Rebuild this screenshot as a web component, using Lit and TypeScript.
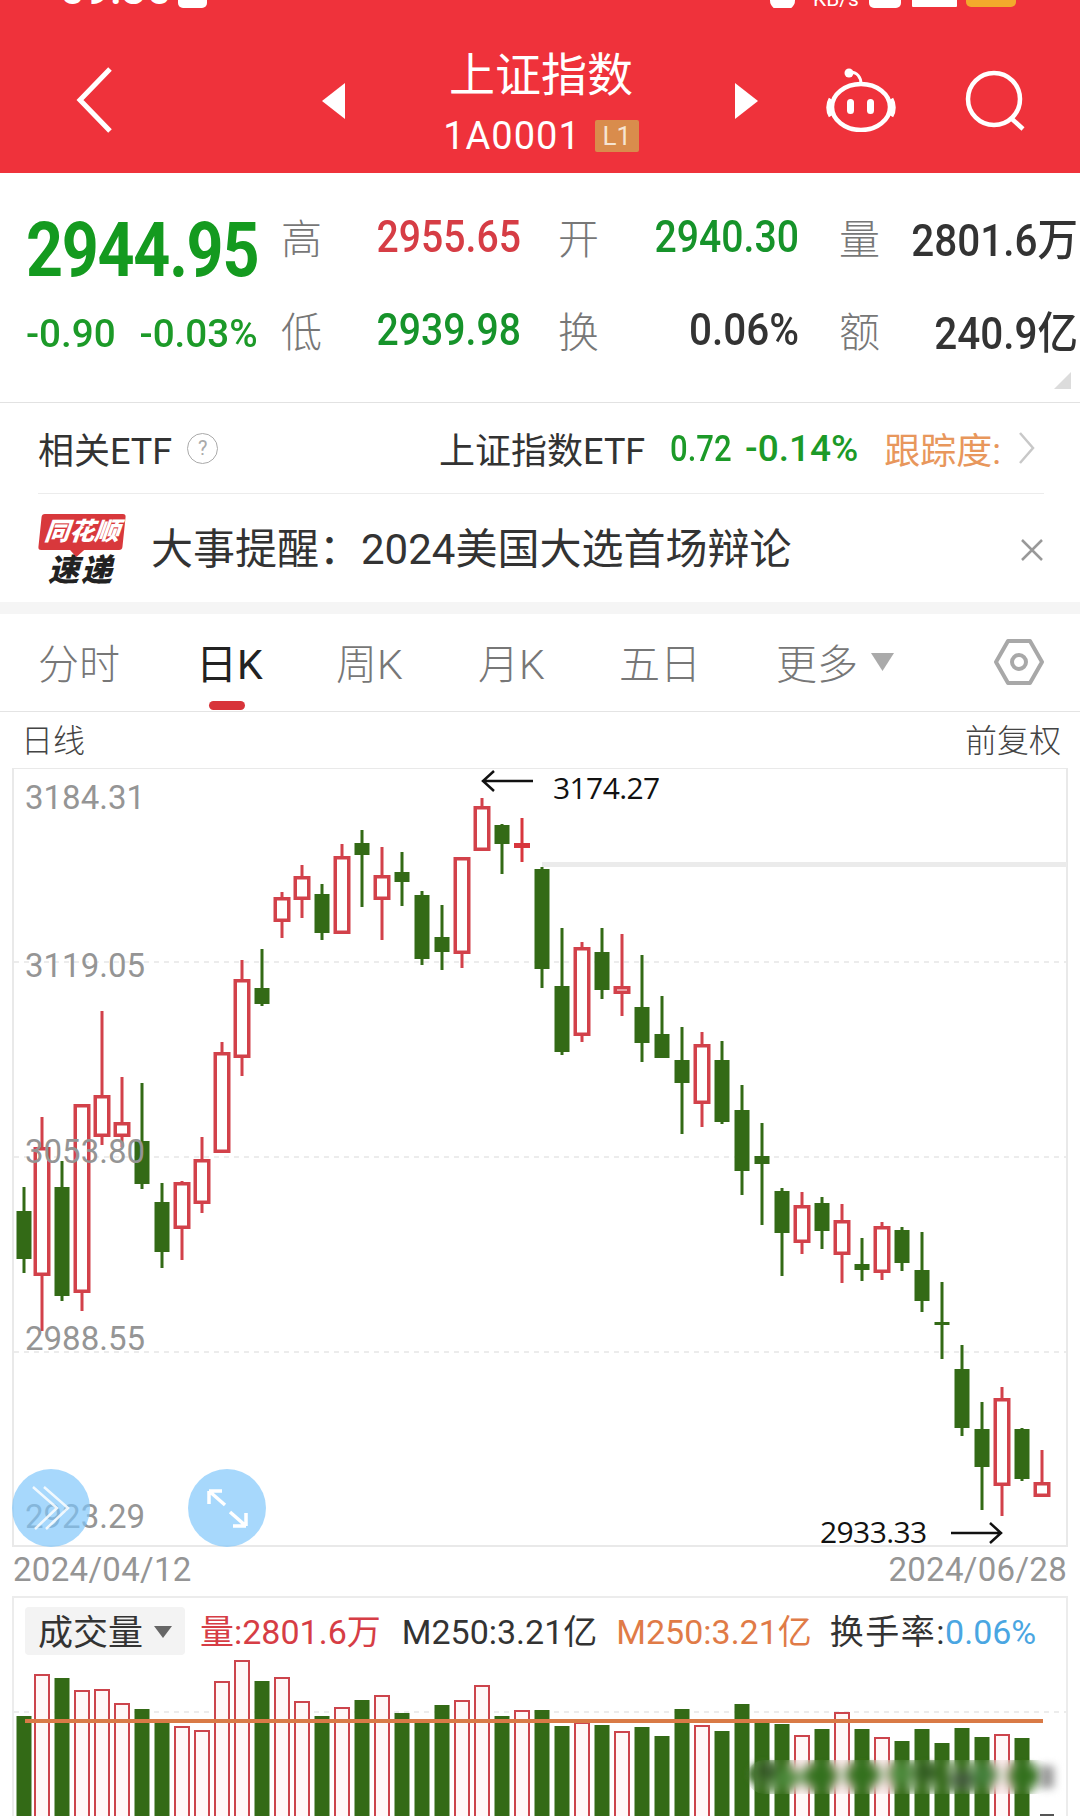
import { LitElement, html, css, svg } from "lit";
import { customElement } from "lit/decorators.js";

// kind, high, body top, body bottom, low (in page pixels)
const CANDLES: [string, number, number, number, number][] = [
  ["g", 1187, 1211, 1259, 1273], ["r", 1117, 1147, 1276, 1331], ["g", 1161, 1187, 1296, 1301],
  ["r", 1104, 1104, 1293, 1311], ["r", 1011, 1095, 1137, 1145], ["r", 1077, 1122, 1137, 1147],
  ["g", 1083, 1141, 1184, 1189], ["g", 1183, 1202, 1252, 1268], ["r", 1181, 1182, 1229, 1260],
  ["r", 1137, 1159, 1204, 1213], ["r", 1042, 1052, 1153, 1153], ["r", 960, 979, 1058, 1076],
  ["g", 949, 988, 1004, 1006], ["r", 892, 897, 922, 938], ["r", 865, 876, 900, 918],
  ["g", 884, 894, 933, 940], ["r", 844, 856, 934, 934], ["g", 830, 843, 855, 907],
  ["r", 847, 875, 900, 940], ["g", 852, 872, 882, 906], ["g", 891, 895, 959, 965],
  ["g", 905, 937, 952, 970], ["r", 857, 857, 954, 968], ["r", 798, 806, 851, 851],
  ["g", 824, 825, 844, 874], ["d", 818, 843, 848, 862], ["g", 867, 869, 969, 988],
  ["g", 928, 986, 1052, 1055], ["r", 942, 947, 1036, 1042], ["g", 928, 952, 990, 999],
  ["r", 934, 986, 994, 1016], ["g", 955, 1007, 1043, 1062], ["g", 996, 1034, 1058, 1058],
  ["g", 1027, 1060, 1083, 1134], ["r", 1032, 1044, 1104, 1127], ["g", 1041, 1060, 1122, 1124],
  ["g", 1085, 1110, 1171, 1195], ["g", 1123, 1156, 1164, 1225], ["g", 1188, 1191, 1233, 1276],
  ["r", 1192, 1205, 1243, 1254], ["g", 1197, 1203, 1231, 1249], ["r", 1204, 1220, 1255, 1283],
  ["g", 1238, 1264, 1270, 1281], ["r", 1222, 1226, 1273, 1280], ["g", 1227, 1230, 1263, 1271],
  ["g", 1232, 1270, 1301, 1312], ["g", 1282, 1322, 1324, 1359], ["g", 1345, 1369, 1428, 1436],
  ["g", 1402, 1429, 1467, 1510], ["r", 1387, 1398, 1486, 1516], ["g", 1428, 1429, 1479, 1481],
  ["r", 1450, 1482, 1497, 1497],
];

const VOLUMES: [string, number][] = [
  ["g", 1716], ["r", 1674], ["g", 1678], ["r", 1690], ["r", 1689], ["r", 1703], ["g", 1709],
  ["g", 1722], ["r", 1726], ["r", 1730], ["r", 1681], ["r", 1660], ["g", 1681], ["r", 1677],
  ["r", 1701], ["g", 1716], ["r", 1707], ["g", 1700], ["r", 1695], ["g", 1713], ["g", 1721],
  ["g", 1705], ["r", 1700], ["r", 1685], ["g", 1716], ["r", 1710], ["g", 1710], ["g", 1726],
  ["r", 1722], ["g", 1725], ["r", 1731], ["g", 1727], ["g", 1736], ["g", 1709], ["r", 1725],
  ["g", 1731], ["g", 1704], ["g", 1722], ["g", 1724], ["r", 1735], ["g", 1729], ["r", 1712],
  ["g", 1729], ["r", 1737], ["g", 1741], ["g", 1729], ["g", 1743], ["g", 1728], ["g", 1737],
  ["r", 1734], ["g", 1738],
];

const AXIS = [
  { label: "3184.31", y: 809 },
  { label: "3119.05", y: 977 },
  { label: "3053.80", y: 1163 },
  { label: "2988.55", y: 1350 },
  { label: "2923.29", y: 1528 },
];

// blurred watermark over the volume bars: x, y, rx, ry, colour
const SMUDGE: [number, number, number, number, string][] = [
  [763, 1774, 15, 12, "#3f6f2c"], [787, 1778, 14, 9, "#4c8a3a"], [820, 1776, 18, 12, "#33701f"],
  [863, 1775, 18, 12, "#33701f"], [900, 1774, 12, 10, "#4c8a3a"], [927, 1773, 15, 10, "#3a6a25"],
  [962, 1780, 14, 9, "#4a6a42"], [985, 1775, 13, 10, "#42803a"], [1025, 1776, 17, 12, "#33701f"],
  [768, 1771, 8, 6, "#2c3f24"], [926, 1772, 7, 5, "#25491a"], [963, 1780, 7, 6, "#3e4a3a"],
];

const slotX = (i: number) => (i === 0 ? 24 : 22 + 20 * i);

@customElement("app-root")
export class AppRoot extends LitElement {
  static styles = css`
    :host {
      display: block;
      width: 1080px;
      height: 1816px;
      overflow: hidden;
      background: #fff;
      font-family: Roboto, "Noto Sans CJK SC", sans-serif;
      color: #333;
    }

    .header {
      height: 173px;
      background: #ef323b;
      color: #fff;
      position: relative;
      display: flex;
      align-items: flex-start;
      padding-top: 53px;
      box-sizing: border-box;
    }
    .status {
      position: absolute;
      inset: 0 0 auto 0;
      height: 8px;
      overflow: hidden;
    }
    .clock {
      position: absolute;
      left: 60px;
      top: -30px;
      font-size: 44px;
      font-weight: 500;
      line-height: 38px;
    }
    .speed {
      position: absolute;
      left: 813px;
      top: -12px;
      font-size: 21px;
      line-height: 22px;
    }
    .bit {
      position: absolute;
      top: -10px;
      height: 18px;
      background: #fff;
      border-radius: 5px;
    }
    .bit.clip-icon { left: 178px; width: 29px; }
    .bit.dot { left: 770px; width: 25px; height: 21px; border-radius: 50%; }
    .bit.wifi { left: 869px; width: 32px; }
    .bit.signal { left: 912px; width: 45px; border-radius: 1px; height: 17px; }
    .bit.battery { left: 966px; width: 50px; background: #f3a92c; height: 17px; }

    .back { margin: 14px 0 0 76px; width: 38px; height: 66px; flex: none; }
    .nav {
      margin-left: 208px;
      width: 436px;
      display: flex;
      justify-content: space-between;
      flex: none;
    }
    .nav svg { margin-top: 30px; width: 23px; height: 36px; }
    .stock { display: flex; flex-direction: column; align-items: center; width: 200px; margin-left: 2px; }
    .stock-name { font-size: 46px; line-height: 46px; margin-top: -1px; }
    .stock-code { display: flex; align-items: center; gap: 14px; margin-top: 21px; font-size: 38px; line-height: 34px; letter-spacing: 1px; }
    .badge {
      width: 44px;
      height: 32px;
      background: #d98c4c;
      border-radius: 2px;
      font-size: 26px;
      line-height: 32px;
      text-align: center;
      letter-spacing: 0;
      color: #f6e4d2;
    }
    .robot { margin: 15px 0 0 68px; width: 70px; height: 64px; flex: none; }
    .search { margin: 17px 0 0 69px; width: 62px; height: 62px; flex: none; }

    .quote {
      position: relative;
      height: 230px;
      box-sizing: border-box;
      padding: 19px 0 0 26px;
      border-bottom: 1px solid #e2e2e2;
      display: grid;
      grid-template-columns: 255px 41px 199px 78px 200px 81px 198px;
      grid-template-rows: 92px 93px;
      align-items: center;
      font-size: 44px;
    }
    .price {
      font-size: 76px;
      font-weight: 700;
      line-height: 60px;
      color: #149a1f;
      letter-spacing: -1.5px;
      margin-top: 24px;
      white-space: nowrap;
      transform: scaleX(0.85);
      transform-origin: left center;
    }
    .change {
      display: flex;
      justify-content: space-between;
      width: 234px;
      font-size: 39px;
      font-weight: 500;
      color: #1c9a28;
      margin-top: 6px;
      transform: scaleX(0.99);
      transform-origin: left center;
    }
    .qlabel { font-size: 41px; color: #777; text-align: right; font-weight: 300; margin-top: -4px; }
    .qval {
      text-align: right;
      white-space: nowrap;
      font-weight: 500;
      transform: scaleX(0.89);
      transform-origin: right center;
      margin-top: -2px;
    }
    .up { color: #d63d45; }
    .down { color: #16932a; }
    .qval.flat { color: #333; transform: scaleX(0.92); }
    .fold {
      position: absolute;
      right: 9px;
      bottom: 13px;
      width: 17px;
      height: 17px;
      background: #dcdcdc;
      clip-path: polygon(100% 0, 100% 100%, 0 100%);
    }

    .etf {
      height: 91px;
      margin: 0 36px 0 38px;
      display: flex;
      align-items: center;
      font-size: 36px;
      border-bottom: 1px solid #ececec;
      box-sizing: border-box;
      white-space: nowrap;
    }
    .help {
      margin-left: 15px;
      width: 31px;
      height: 31px;
      border: 1.5px solid #aaa;
      border-radius: 50%;
      box-sizing: border-box;
      color: #aaa;
      font-size: 20px;
      line-height: 28px;
      text-align: center;
    }
    .etf-name { margin-left: auto; }
    .etf-nums {
      margin-left: 25px;
      width: 188px;
      display: flex;
      color: #1c9a28;
      font-size: 37px;
      font-weight: 500;
    }
    .etf-last { width: 78px; transform: scaleX(0.84); transform-origin: left center; }
    .track { margin-left: 26px; color: #e8975c; }
    .chev { margin-left: 17px; margin-right: 8px; width: 18px; height: 34px; }

    .news {
      height: 108px;
      display: flex;
      align-items: center;
      padding-left: 38px;
      padding-top: 4px;
      font-size: 42px;
      line-height: 48px;
      box-sizing: border-box;
    }
    .logo { width: 86px; height: 72px; margin-right: 27px; flex: none; }
    .bubble {
      display: block;
      height: 36px;
      margin-left: 2px;
      background: #d8383c;
      transform: skewX(-6deg);
      border-radius: 3px;
      color: #fff;
      font-size: 25px;
      line-height: 36px;
      font-weight: 900;
      font-style: italic;
      text-align: center;
      white-space: nowrap;
      position: relative;
    }
    .bubble::after {
      content: "";
      position: absolute;
      left: 34px;
      bottom: -5px;
      width: 10px;
      height: 10px;
      background: #d8383c;
      transform: rotate(45deg);
    }
    .express {
      display: block;
      margin-top: 5px;
      font-size: 31px;
      line-height: 32px;
      font-weight: 900;
      font-style: italic;
      color: #222;
      text-align: center;
      letter-spacing: 2px;
    }
    .close { margin-left: auto; margin-right: 36px; width: 24px; height: 24px; }

    .gap { height: 12px; background: #f5f5f5; }

    .tabs {
      position: relative;
      height: 98px;
      box-sizing: border-box;
      border-bottom: 1px solid #e4e4e4;
      font-size: 41px;
      color: #777;
      font-weight: 300;
    }
    .tab { position: absolute; top: 26px; line-height: 50px; white-space: nowrap; }
    .tab.on { color: #222; font-weight: 400; }
    .tab-bar {
      position: absolute;
      left: 209px;
      top: 87px;
      width: 36px;
      height: 9px;
      border-radius: 5px;
      background: #d8343a;
    }
    .more-arrow { position: absolute; left: 871px; top: 39px; width: 23px; height: 18px; }
    .hex { position: absolute; left: 994px; top: 24px; width: 50px; height: 48px; }

    .subhead {
      height: 56px;
      box-sizing: border-box;
      padding: 0 19px 4px 21px;
      display: flex;
      justify-content: space-between;
      align-items: center;
      font-size: 32px;
      color: #444;
      font-weight: 300;
    }

    .chart { display: block; width: 1080px; height: 779px; }
    .grid-line { stroke: #e6e6e6; stroke-width: 1.5; stroke-dasharray: 5 5; }
    .axis { fill: #959595; font-size: 33px; }
    .note { fill: #111; font-size: 30px; font-family: "Open Sans", sans-serif; letter-spacing: -0.6px; }

    .dates {
      height: 49px;
      display: flex;
      justify-content: space-between;
      padding: 0 13px;
      font-size: 33px;
      line-height: 46px;
      letter-spacing: 0.3px;
      color: #959595;
      box-sizing: border-box;
    }

    .volume {
      position: relative;
      height: 220px;
      margin: 0 12px;
      border: 2px solid #ececec;
      border-bottom: 0;
      box-sizing: border-box;
    }
    .legend {
      position: relative;
      display: flex;
      align-items: center;
      height: 48px;
      margin: 9px 0 0 11px;
      font-size: 34px;
      line-height: 44px;
      white-space: nowrap;
    }
    .picker {
      display: flex;
      align-items: center;
      width: 160px;
      height: 48px;
      box-sizing: border-box;
      padding: 6px 0 0 13px;
      background: #f3f3f3;
      border-radius: 4px;
      color: #333;
      font-size: 35px;
      margin-right: 15px;
    }
    .picker svg { margin: -5px 0 0 11px; width: 18px; height: 12px; }
    .leg { margin-right: 21px; margin-top: 2px; }
    .leg.red { color: #d63d45; }
    .leg.orange { color: #e07b47; margin-right: 18px; margin-left: -2px; }
    .leg.turnover { letter-spacing: 1.5px; }
    .leg .blue { color: #4aa6e2; letter-spacing: 0; margin-left: -1px; }
    .vol-svg { display: block; position: absolute; left: -14px; top: 57px; width: 1080px; height: 161px; }
    .smudge {
      position: absolute;
      left: 733px;
      top: 162px;
      width: 308px;
      height: 34px;
      backdrop-filter: blur(5px);
      border-radius: 17px;
      mask-image: linear-gradient(90deg, transparent, #000 6%, #000 94%, transparent);
    }
    .mark {
      position: absolute;
      left: 1026px;
      top: 168px;
      width: 14px;
      height: 22px;
      background: #9a9a9a;
      filter: blur(4px);
    }
    .tick {
      position: absolute;
      left: 1026px;
      top: 216px;
      width: 14px;
      height: 2px;
      background: #555;
    }

    .fab {
      position: absolute;
      width: 78px;
      height: 78px;
      border-radius: 50%;
      top: 1469px;
      background: rgba(126, 198, 250, 0.68);
    }
    .fab svg { display: block; width: 78px; height: 78px; }
    .fab.one { left: 12px; }
    .fab.two { left: 188px; }
  `;

  renderChart() {
    return svg`
      <rect x="13" y="768" width="1054" height="778" fill="none" stroke="#e9e9e9" stroke-width="2" />
      ${[962, 1157, 1352].map((y) => svg`<line class="grid-line" x1="14" x2="1066" y1=${y} y2=${y} />`)}
      <rect x="542" y="862" width="525" height="5" fill="#ebebeb" />
      ${CANDLES.map(([kind, high, top, bottom, low], i) => {
        const x = slotX(i);
        if (kind === "g") {
          return svg`
            <rect x=${x - 1.5} y=${high} width="3" height=${low - high} fill="#336a16" />
            <rect x=${x - 7.5} y=${top} width="15" height=${Math.max(bottom - top, 3)} fill="#336a16" />`;
        }
        if (kind === "d") {
          return svg`
            <rect x=${x - 1.5} y=${high} width="3" height=${low - high} fill="#d8363d" />
            <rect x=${x - 8} y=${top} width="16" height=${bottom - top} fill="#d8363d" />`;
        }
        return svg`
          <rect x=${x - 1.5} y=${high} width="3" height=${top - high} fill="#d2414a" />
          <rect x=${x - 1.5} y=${bottom} width="3" height=${low - bottom} fill="#d2414a" />
          <rect x=${x - 6.75} y=${top + 1.75} width="13.5" height=${bottom - top - 3.5} fill="#fff" stroke="#d2414a" stroke-width="3.5" />`;
      })}
      ${AXIS.map((a) => svg`<text class="axis" x="25" y=${a.y}>${a.label}</text>`)}
      <text class="note" x="553" y="799">3174.27</text>
      <path d="M533 781H484M494 771l-11 10 11 10" fill="none" stroke="#111" stroke-width="2.5" />
      <text class="note" x="820" y="1543">2933.33</text>
      <path d="M951 1533h49M990 1523l11 10-11 10" fill="none" stroke="#111" stroke-width="2.5" />
    `;
  }

  renderVolume() {
    return svg`
      <defs><filter id="soft" x="-50%" y="-50%" width="200%" height="200%"><feGaussianBlur stdDeviation="3" /></filter></defs>
      <line x1="14" x2="1066" y1="1712" y2="1712" stroke="#e6e6e6" stroke-width="1.5" stroke-dasharray="5 5" />
      ${VOLUMES.map(([kind, top], i) => {
        const x = slotX(i);
        return kind === "g"
          ? svg`<rect x=${x - 7.5} y=${top} width="15" height=${1816 - top} fill="#336a16" />`
          : svg`<rect x=${x - 7} y=${top + 1} width="14" height=${1816 - top} fill="#fff8f8" stroke="#cc444c" stroke-width="2" />`;
      })}
      <rect x="25" y="1719" width="1018" height="4" fill="#d97a46" />
      <g filter="url(#soft)">
        ${SMUDGE.map(([x, y, rx, ry, fill]) => svg`<ellipse cx=${x} cy=${y} rx=${rx} ry=${ry} fill=${fill} />`)}
      </g>
    `;
  }

  render() {
    return html`
      <div class="header">
        <div class="status">
          <span class="clock">09:30</span>
          <span class="bit clip-icon"></span>
          <span class="bit dot"></span>
          <span class="speed">KB/s</span>
          <span class="bit wifi"></span>
          <span class="bit signal"></span>
          <span class="bit battery"></span>
        </div>
        <svg class="back" viewBox="0 0 38 66" fill="none" stroke="#fff" stroke-width="5">
          <path d="M34 2L4 33l30 31" />
        </svg>
        <div class="nav">
          <svg viewBox="0 0 23 36"><path d="M23 0v36L0 18z" fill="#fff" /></svg>
          <div class="stock">
            <span class="stock-name">上证指数</span>
            <span class="stock-code">1A0001<span class="badge">L1</span></span>
          </div>
          <svg viewBox="0 0 23 36"><path d="M0 0v36l23-18z" fill="#fff" /></svg>
        </div>
        <svg class="robot" viewBox="0 0 70 64" fill="none" stroke="#fff">
          <ellipse cx="35" cy="39" rx="29" ry="23" stroke-width="4.5" />
          <path d="M5 31C2 36 2 43 5 48M65 31c3 5 3 12 0 17" stroke-width="5" />
          <path d="M24 4c7 0 11 5 11 12" stroke-width="3" />
          <circle cx="23" cy="5" r="4.5" fill="#fff" stroke="none" />
          <rect x="21" y="31" width="7" height="15" rx="3.5" fill="#fff" stroke="none" />
          <rect x="41" y="31" width="7" height="15" rx="3.5" fill="#fff" stroke="none" />
        </svg>
        <svg class="search" viewBox="0 0 62 62" fill="none" stroke="#fff" stroke-width="4.5">
          <circle cx="29" cy="29" r="26" />
          <path d="M47 49l11 10" />
        </svg>
      </div>

      <div class="quote">
        <div class="price">2944.95</div>
        <div class="qlabel">高</div>
        <div class="qval up">2955.65</div>
        <div class="qlabel">开</div>
        <div class="qval down">2940.30</div>
        <div class="qlabel">量</div>
        <div class="qval flat">2801.6万</div>
        <div class="change"><span>-0.90</span><span>-0.03%</span></div>
        <div class="qlabel">低</div>
        <div class="qval down">2939.98</div>
        <div class="qlabel">换</div>
        <div class="qval flat">0.06%</div>
        <div class="qlabel">额</div>
        <div class="qval flat">240.9亿</div>
        <div class="fold"></div>
      </div>

      <div class="etf">
        <span>相关ETF</span>
        <span class="help">?</span>
        <span class="etf-name">上证指数ETF</span>
        <span class="etf-nums"><span class="etf-last">0.72</span><span>-0.14%</span></span>
        <span class="track">跟踪度:</span>
        <svg class="chev" viewBox="0 0 18 34" fill="none" stroke="#c8c8c8" stroke-width="2.5">
          <path d="M2 2l13 15L2 32" />
        </svg>
      </div>

      <div class="news">
        <div class="logo">
          <span class="bubble">同花顺</span>
          <span class="express">速递</span>
        </div>
        <span>大事提醒：2024美国大选首场辩论</span>
        <svg class="close" viewBox="0 0 24 24" fill="none" stroke="#999" stroke-width="2.5">
          <path d="M2 2l20 20M22 2L2 22" />
        </svg>
      </div>

      <div class="gap"></div>

      <div class="tabs">
        <span class="tab" style="left:38px">分时</span>
        <span class="tab on" style="left:196px">日K</span>
        <span class="tab" style="left:336px">周K</span>
        <span class="tab" style="left:478px">月K</span>
        <span class="tab" style="left:619px">五日</span>
        <span class="tab" style="left:776px">更多</span>
        <svg class="more-arrow" viewBox="0 0 23 18"><path d="M0 0h23L11.5 18z" fill="#aaa" /></svg>
        <svg class="hex" viewBox="0 0 50 48" fill="none" stroke="#a8a8a8">
          <path d="M14 3h22l12 21-12 21H14L2 24z" stroke-width="4" stroke-linejoin="round" />
          <circle cx="25" cy="24" r="7" stroke-width="4" />
        </svg>
        <div class="tab-bar"></div>
      </div>

      <div class="subhead"><span>日线</span><span>前复权</span></div>

      <svg class="chart" viewBox="0 768 1080 779">${this.renderChart()}</svg>

      <div class="dates"><span>2024/04/12</span><span>2024/06/28</span></div>

      <div class="volume">
        <svg class="vol-svg" viewBox="0 1655 1080 161">${this.renderVolume()}</svg>
        <div class="legend">
          <span class="picker">成交量
            <svg viewBox="0 0 18 12"><path d="M0 0h18L9 12z" fill="#666" /></svg>
          </span>
          <span class="leg red">量:2801.6万</span>
          <span class="leg">M250:3.21亿</span>
          <span class="leg orange">M250:3.21亿</span>
          <span class="leg turnover">换手率:<span class="blue">0.06%</span></span>
        </div>
        <div class="smudge"></div>
        <div class="mark"></div>
        <div class="tick"></div>
      </div>

      <div class="fab one">
        <svg viewBox="0 0 78 78" fill="none" stroke="#fff" stroke-width="2.5" opacity="0.85">
          <path d="M21 18l24 21-22 21M32 18l24 21-22 21" />
        </svg>
      </div>
      <div class="fab two">
        <svg viewBox="0 0 78 78" fill="none" stroke="#fff" stroke-width="3.5">
          <path d="M21 22h13M21 22v13M21 22l16 14M58 57H45M58 57V44M58 57L42 43" />
        </svg>
      </div>
    `;
  }
}
